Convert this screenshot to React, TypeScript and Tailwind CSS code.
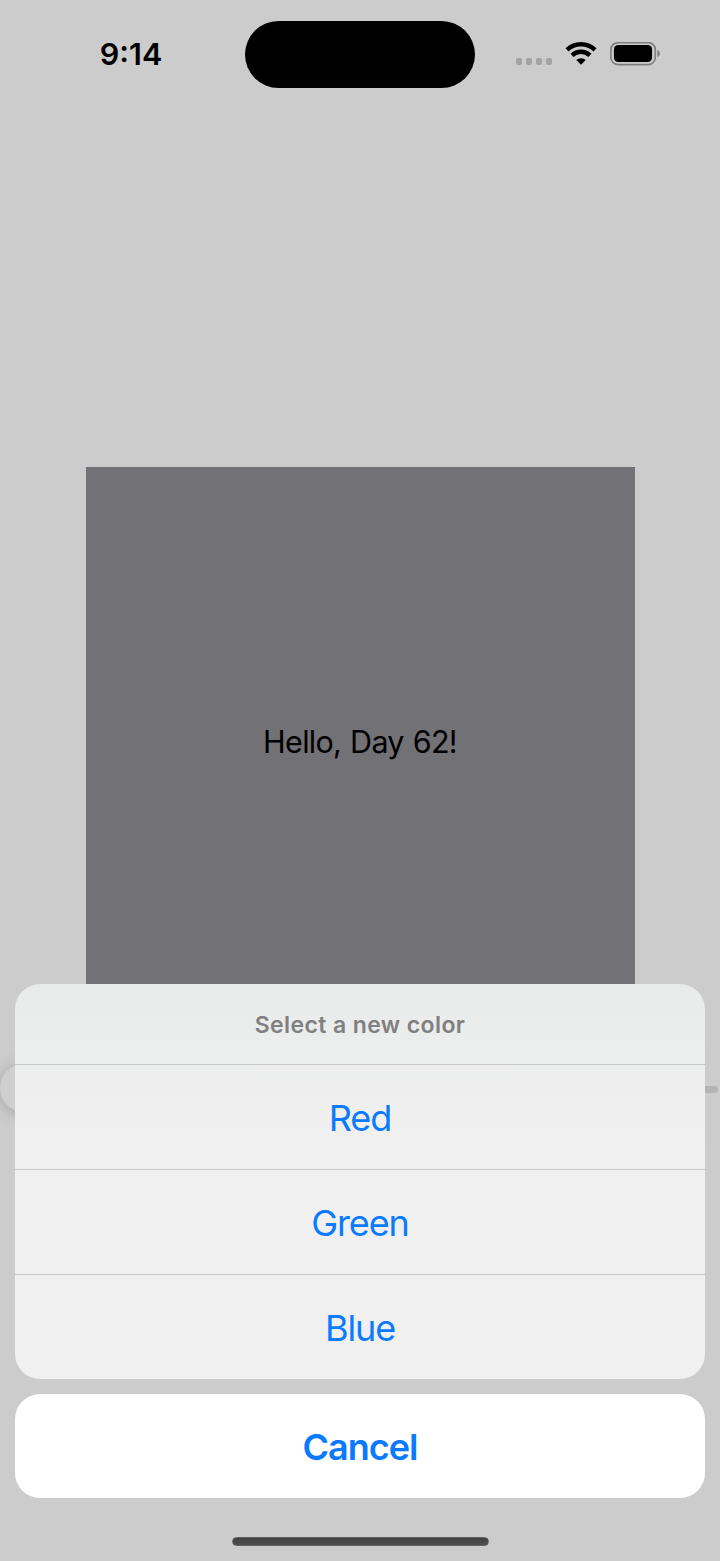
import React from "react";

function WifiIcon() {
  return (
    <svg className="h-6 w-8" viewBox="0 0 32 24" fill="none" stroke="#000" strokeWidth="4.5">
      <path d="M2 7.8a20.6 20.6 0 0 1 28 0" />
      <path d="M7.1 13.4a12.9 12.9 0 0 1 17.8 0" />
      <path d="M16 22.8l-4.7-4.7a6.7 6.7 0 0 1 9.4 0z" fill="#000" stroke="none" />
    </svg>
  );
}

function BatteryIcon() {
  return (
    <svg className="h-6 w-[51px]" viewBox="0 0 51 24" fill="none">
      <rect x="0.9" y="0.6" width="44.4" height="22" rx="7" stroke="#7c7c7c" strokeWidth="1.6" />
      <rect x="3.9" y="3" width="38.2" height="17" rx="4.4" fill="#000" />
      <path d="M47.4 7.9c1.5.6 2.4 2 2.4 3.6s-.9 3-2.4 3.6z" fill="#7c7c7c" />
    </svg>
  );
}

function StatusBar() {
  return (
    <header className="flex h-[108px] shrink-0 items-center">
      <div className="flex w-[245px] justify-center">
        <span className="ml-[17px] text-[30.5px] leading-8 font-semibold text-black">9:14</span>
      </div>
      <div className="h-[67px] w-[230px] rounded-full bg-black" />
      <div className="flex flex-1 items-center pl-[41px]">
        <div className="mt-[15px] flex gap-[3.6px]">
          {[0, 1, 2, 3].map((i) => (
            <span key={i} className="size-[6.4px] rounded-[2px] bg-[#a2a2a2]" />
          ))}
        </div>
        <div className="ml-[12.6px]">
          <WifiIcon />
        </div>
        <div className="ml-[13px]">
          <BatteryIcon />
        </div>
      </div>
    </header>
  );
}

function Slider() {
  return (
    <div className="mt-[47px] flex h-[48px] items-center pr-0.5">
      <div className="h-[48px] w-[74px] shrink-0 rounded-full bg-[#cfcfcf] shadow-[0_2px_16px_rgba(0,0,0,0.2)]" />
      <div className="mt-0.5 h-[7px] flex-1 rounded-r-full bg-[#b4b4b6]" />
    </div>
  );
}

const options = ["Red", "Green", "Blue"];

function ActionSheet() {
  return (
    <div className="absolute inset-0 flex flex-col justify-end px-[15px] pb-[15px] text-center">
      <div className="overflow-hidden rounded-[25px] bg-linear-to-b/srgb from-[#e9ebea] via-[#f0f0f0] via-40% to-[#f0f0f0]">
        <p className="flex h-20 items-center justify-center text-[23px] leading-8 font-semibold text-[#808080]">
          <span className="mt-0.5 tracking-[0.4px]">Select a new color</span>
        </p>
        {options.map((name) => (
          <button
            key={name}
            className="flex h-[105px] w-full items-center justify-center border-t border-[#c8caca] text-[36px] leading-10 text-[#0a7aff]"
          >
            <span className="mt-px tracking-[-1.1px]">{name}</span>
          </button>
        ))}
      </div>
      <button className="mt-[15px] flex h-[104px] items-center justify-center rounded-[25px] bg-white text-[36px] leading-10 font-semibold text-[#0a7aff]">
        <span className="mt-px tracking-[-1px]">Cancel</span>
      </button>
      <div className="mx-auto mt-[39px] h-[9px] w-[257px] shrink-0 rounded-full border border-[#606060] bg-linear-to-b from-[#404040] to-[#505050]" />
    </div>
  );
}

export default function App() {
  return (
    <div className="relative flex h-[1561px] w-[720px] flex-col overflow-hidden bg-[#cccccc] font-['Inter',sans-serif]">
      <StatusBar />
      <main className="mt-[359px] flex flex-col">
        <div className="mx-auto flex h-[550px] w-[549px] items-center justify-center bg-[#727176]">
          <span className="text-[30.5px] leading-10 tracking-[-0.7px] [word-spacing:1px] text-black">
            Hello, Day 62!
          </span>
        </div>
        <Slider />
      </main>
      <ActionSheet />
    </div>
  );
}
